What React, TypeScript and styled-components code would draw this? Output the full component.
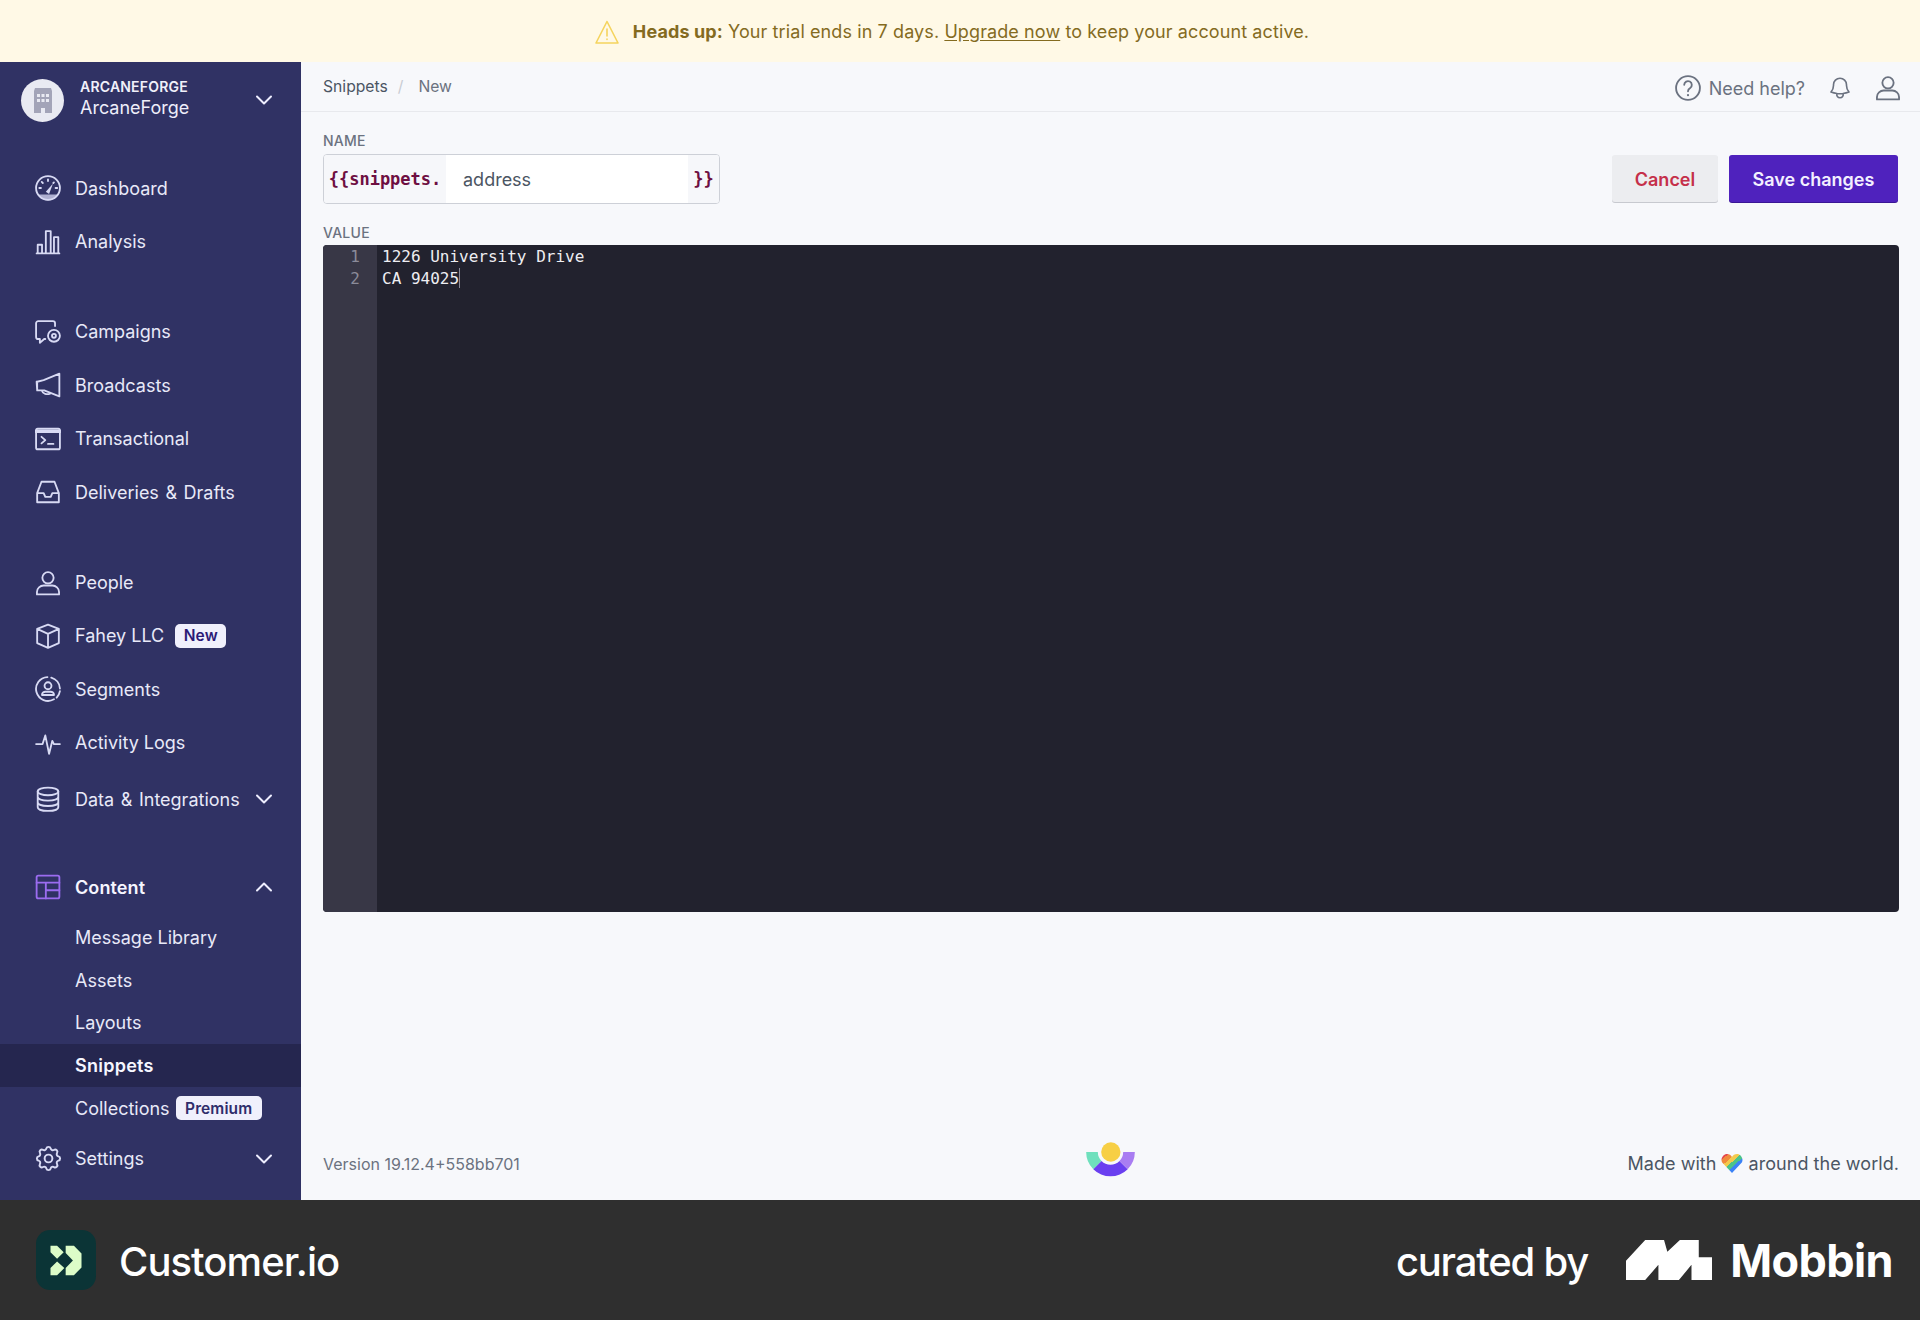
import React from "react";
import styled, { createGlobalStyle } from "styled-components";
import { HiOutlineCog } from "react-icons/hi";
import { HiOutlineBell } from "react-icons/hi2";

const Global = createGlobalStyle`
  html, body { margin: 0; padding: 0; background: #f7f8fb; }
  body { font-family: Inter, "Noto Sans", sans-serif; -webkit-font-smoothing: antialiased; }
  * { box-sizing: border-box; }
`;

const Page = styled.div`
  width: 1920px; height: 1320px; display: flex; flex-direction: column; overflow: hidden;
`;
const Banner = styled.div`
  height: 62px; flex: none; background: #fff9e6; color: #846b1f; font-size: 18px; letter-spacing: 0.1px;
  display: flex; align-items: center; justify-content: center; gap: 14px;
  padding-right: 16px; padding-top: 1px;
  b { font-weight: 700; }
  u { text-underline-offset: 2px; }
`;
const Middle = styled.div`flex: 1; display: flex; min-height: 0;`;
const Sidebar = styled.aside`
  width: 301px; flex: none; background: #303264; color: #e8e9f8; display: flex; flex-direction: column;
`;
const Org = styled.div`
  height: 76px; margin-bottom: 23.5px; padding: 0 0 0 21px; display: flex; align-items: center; gap: 16px; position: relative;
`;
const Avatar = styled.div`
  width: 43px; height: 43px; border-radius: 50%; background: #e9eaf2; display: flex; align-items: center; justify-content: center;
`;
const OrgText = styled.div`display: flex; flex-direction: column; flex: 1; margin-top: -4px;`;
const OrgCaps = styled.div`font-size: 14px; font-weight: 600; line-height: 20px; letter-spacing: 0.2px; color: #f0f0fa;`;
const OrgName = styled.div`font-size: 18px; line-height: 23px; margin-top: -1px; color: #eeeefa;`;
const Chev = styled.svg<{ $up?: boolean }>`
  width: 18px; height: 18px; flex: none; fill: none; stroke: #eef; stroke-width: 2; stroke-linecap: round; stroke-linejoin: round;
  transform: ${(p) => (p.$up ? "rotate(180deg)" : "none")};
`;
const OrgChev = styled.div`margin-right: 28px; margin-top: -1px; display: flex;`;
const Group = styled.div<{ $gap?: number }>`margin-bottom: ${(p) => p.$gap ?? 0}px; display: flex; flex-direction: column;`;
const Row = styled.div<{ $active?: boolean; $mt?: number }>`
  height: 53.4px; flex: none; padding: 0 28px 0 35px; display: flex; align-items: center;
  margin-top: ${(p) => p.$mt ?? 0}px;
  font-size: 18px; font-weight: ${(p) => (p.$active ? 600 : 400)}; color: ${(p) => (p.$active ? "#f6f6ff" : "#e8e9f8")};
  letter-spacing: ${(p) => (p.$active ? "0.1px" : "0")};
`;
const IconBox = styled.span<{ $color?: string; $size?: number }>`
  width: 26px; height: 26px; margin-right: 14px; flex: none; display: flex; align-items: center; justify-content: center;
  color: ${(p) => p.$color ?? "#d8daf4"};
  svg { width: ${(p) => p.$size ?? 26}px; height: ${(p) => p.$size ?? 26}px; flex: none; display: block; }
`;
const Label = styled.span`flex: 1; display: flex; align-items: center; white-space: pre;`;
const Amp = styled.span`margin: 0 1.5px;`;
const Sub = styled.div<{ $active?: boolean }>`
  height: 42.7px; flex: none; padding-left: 75px; display: flex; align-items: center; font-size: 18px;
  background: ${(p) => (p.$active ? "#25264f" : "transparent")};
  font-weight: ${(p) => (p.$active ? 600 : 400)};
  letter-spacing: ${(p) => (p.$active ? "0.25px" : "0")};
  color: ${(p) => (p.$active ? "#f6f6ff" : "#e8e9f8")};
`;
const Badge = styled.span<{ $ml: number; $color: string; $w: number }>`
  margin-left: ${(p) => p.$ml}px; height: 24px; width: ${(p) => p.$w}px; border-radius: 5px; background: #f0f0fc; color: ${(p) => p.$color};
  font-size: 15.5px; font-weight: 600; display: inline-flex; align-items: center; justify-content: center; letter-spacing: 0.1px;
`;
const SubList = styled.div`margin-top: 2px; margin-bottom: 2.5px; display: flex; flex-direction: column;`;

const Main = styled.main`flex: 1; min-width: 0; display: flex; flex-direction: column; background: #f7f8fb;`;
const Top = styled.header`
  height: 50px; flex: none; border-bottom: 1px solid #e8e9ed; padding: 0 21px 0 22px; display: flex; align-items: center;
`;
const Crumb = styled.nav`
  flex: 1; display: flex; align-items: center; font-size: 15.7px; color: #4b5563;
  i { font-style: normal; color: #c9ccd3; margin: 0 15px 0 10px; }
  span { color: #6b7280; }
`;
const TopRight = styled.div`display: flex; align-items: center; color: #6b7280; margin-right: -2px; margin-top: 3px;`;
const Help = styled.div`display: flex; align-items: center; gap: 8px; font-size: 18px; color: #6b7280; margin-right: 22px;`;
const TopIcon = styled.span<{ $mr?: number }>`
  display: flex; margin-right: ${(p) => p.$mr ?? 0}px; svg { width: 26px; height: 26px; display: block; }
`;
const Body = styled.div`flex: 1; padding: 19px 21px 0 22px; display: flex; flex-direction: column;`;
const FormRow = styled.div`display: flex; justify-content: space-between; align-items: flex-end;`;
const FieldLabel = styled.div`font-size: 14px; line-height: 20px; font-weight: 500; color: #6b7280; letter-spacing: 0.25px;`;
const NameInput = styled.div`
  margin-top: 3px; width: 397px; height: 50px; border: 1.5px solid #cdd0d7; border-radius: 4px; background: #fff; display: flex; overflow: hidden;
`;
const Affix = styled.div<{ $w: number }>`
  width: ${(p) => p.$w}px; flex: none; background: #f6f7fa; display: flex; align-items: center; justify-content: center;
  font-family: "DejaVu Sans Mono", monospace; font-weight: 700; font-size: 17px; color: #6e0f42;
`;
const NameValue = styled.div`flex: 1; padding-left: 17px; display: flex; align-items: center; font-size: 18px; color: #4b5563;`;
const Actions = styled.div`display: flex; gap: 11px; margin-bottom: 2px; margin-right: 1px;`;
const Btn = styled.button<{ $primary?: boolean; $w: number }>`
  width: ${(p) => p.$w}px; height: 47px; border: none; border-radius: 3px; padding: 2px 0 0; font: 600 18px Inter, sans-serif; 
  background: ${(p) => (p.$primary ? "#4f22bd" : "#ecedf0")};
  color: ${(p) => (p.$primary ? "#f3f0ff" : "#c5304a")};
  box-shadow: ${(p) => (p.$primary ? "0 1px 0 #3a1695" : "0 1px 0 #c7c9cf")};
`;
const ValueLabel = styled(FieldLabel)`margin-top: 19px; margin-bottom: 2px;`;
const Editor = styled.div`
  height: 667px; background: #22222e; border-radius: 4px; display: flex; overflow: hidden;
  font: 16px/22px "DejaVu Sans Mono", monospace;
`;
const Gutter = styled.div`
  width: 54px; flex: none; background: #383746; color: #8b8b99; text-align: right; padding: 1px 17px 0 0;
`;
const Code = styled.div`padding: 1px 0 0 5px; color: #eeeef2; white-space: pre; position: relative;`;
const Caret = styled.span`
  display: inline-block; width: 1px; height: 20px; background: #8b8b99; vertical-align: -4px;
`;
const Spacer = styled.div`flex: 1;`;
const MainFoot = styled.div`
  height: 84px; flex: none; padding: 0 0 2px; display: grid; grid-template-columns: 1fr auto 1fr; align-items: center;
  font-size: 16.5px; color: #4b5563;
`;
const Version = styled.div`font-size: 16px; color: #6b7280; padding-top: 14px;`;
const Made = styled.div`justify-self: end; display: flex; align-items: center; gap: 5px; font-size: 18px; letter-spacing: 0.05px; padding-top: 13px;`;
const CioMark = styled.svg`width: 49px; height: 36px; display: block; margin: 3px 2px 0 0;`;

const Foot = styled.footer`
  height: 120px; flex: none; background: #2f2f2f; color: #fff; display: flex; align-items: center; justify-content: space-between; padding: 0 27px 0 36px;
`;
const Brand = styled.div`display: flex; align-items: center; gap: 23px;`;
const AppIcon = styled.div`
  width: 60px; height: 60px; border-radius: 14px; background: #0b3436; display: flex; align-items: center; justify-content: center;
  svg { width: 34px; height: 33px; }
`;
const BrandName = styled.div`font-size: 40px; font-weight: 500; letter-spacing: -0.95px; padding-top: 2px;`;
const Curated = styled.div`display: flex; align-items: center;`;
const CuratedText = styled.div`font-size: 40px; font-weight: 500; letter-spacing: -1.2px; margin-right: 38px; padding-top: 2px;`;
const MobbinMark = styled.svg`width: 86px; height: 40px; margin-right: 18px; display: block;`;
const MobbinText = styled.div`font-size: 45px; font-weight: 700; letter-spacing: -0.6px;`;

const S = { fill: "none", stroke: "currentColor", strokeWidth: 1.7, strokeLinecap: "round" as const, strokeLinejoin: "round" as const };
const V = ({ children }: { children: React.ReactNode }) => <svg viewBox="0 0 24 24" {...S}>{children}</svg>;

const Down = ({ up }: { up?: boolean }) => (
  <Chev $up={up} viewBox="0 0 18 18"><path d="M2 5.500 9 12.500 16 5.500" /></Chev>
);

const Icons = {
  dash: <V><circle cx="12" cy="12" r="11" /><path d="M2.500 18h19a11 11 0 0 1-19 0z" fill="currentColor" stroke="none" opacity=".75" /><path d="M10 15.500 16.500 8l-3.500 9.500z" fill="currentColor" stroke="none" /><path d="M12 4v1.500M6.200 6.400l1 1M4 12h1.500M19 12h1.500M17.500 6.800l-.6.6" /></V>,
  bars: <V><path d="M1.500 22.500h21M2.500 22v-7.500h4V22M10 22V2h4.500v20M17.500 22V7.500h4V22" /></V>,
  camp: <V><path d="M18.500 6.500V4a2 2 0 0 0-2-2H3a2 2 0 0 0-2 2v12.500a2 2 0 0 0 2 2h1.500v3.500l4-3.500h1" /><circle cx="17.500" cy="15.500" r="5.500" /><circle cx="17.500" cy="15.500" r="1.800" /></V>,
  mega: <V><path d="M22.500 1.500v21L8.500 17H2v-.5L2 9 8 7.500zM1.500 9l.5 7.500" /><path d="M6.500 17.500c.5 2.800 4.500 3.500 7.500 2.400" /></V>,
  term: <V><rect x="1" y="2.500" width="22" height="19" rx="1.500" /><path d="M1 5h22" strokeWidth="3" /><path d="m6 10 3.500 3L6 16M12 16.500h5" /></V>,
  inbox: <V><path d="M2 13v8.500h20V13L18 2.500H6zM2 13h6l1.500 3.500h5L16 13h6" /></V>,
  user: <V><circle cx="12" cy="7.200" r="5.200" /><path d="M1.800 22.500v-2.200c0-3.500 3-6 6.200-6h8c3.200 0 6.200 2.500 6.200 6v2.200z" /></V>,
  cube: <V><path d="M12 1.500 2 5.500v13l10 4.500 10-4.500v-13zM2 5.500l10 4.500 10-4.500M12 10v13" /></V>,
  seg: <V><path d="M15 1.500a11 11 0 0 1 8 10M23 14a11 11 0 0 1-3 6M17.500 21.500A11 11 0 1 1 11.500 1" /><circle cx="12" cy="9" r="3.200" /><path d="M6.500 17.500v-.5c0-1.500 1.500-2.500 3-2.500h5c1.500 0 3 1 3 2.500v.5z" /></V>,
  pulse: <V><path d="M1 13h6l2.500-8 3.500 17 3-12 1.500 3H23" /></V>,
  db: <V><ellipse cx="12" cy="5" rx="9.500" ry="3.500" /><path d="M2.500 5v14.500C2.500 21.500 6.500 23 12 23s9.500-1.500 9.500-3.500V5M2.500 10c0 2 4 3.500 9.500 3.500s9.500-1.500 9.500-3.500M2.500 15c0 2 4 3.500 9.500 3.500s9.500-1.500 9.500-3.500" /></V>,
  layout: <V><rect x="1.500" y="1.500" width="21" height="21" rx="1.500" /><path d="M1.500 8h21M10 8v14.500M10 15h12.500" /></V>,
};

const NavRow = ({ icon, children, color, mt, active, chev, size }: { icon: React.ReactNode; children: React.ReactNode; color?: string; mt?: number; active?: boolean; chev?: "up" | "down"; size?: number }) => (
  <Row $active={active} $mt={mt}>
    <IconBox $color={color} $size={size}>{icon}</IconBox>
    <Label>{children}</Label>
    {chev && <Down up={chev === "up"} />}
  </Row>
);

export default function App() {
  return (
    <Page>
      <Global />
      <Banner>
        <svg width="24" height="24" viewBox="0 0 24 24" fill="none" stroke="#f5d45e" strokeWidth="1.6" strokeLinejoin="round" strokeLinecap="round">
          <path d="M12 1.500 1 23h22zM12 9v7M12 19v.5" />
        </svg>
        <span><b>Heads up:</b> Your trial ends in 7 days. <u>Upgrade now</u> to keep your account active.</span>
      </Banner>
      <Middle>
        <Sidebar>
          <Org>
            <Avatar>
              <svg width="22" height="26" viewBox="0 0 22 26">
                <path d="M3 1h16l1 3v22h-7v-5H9v5H2V4z" fill="#a3a4b8" />
                <g fill="#e9eaf2"><rect x="5" y="7" width="3" height="3" /><rect x="9.500" y="7" width="3" height="3" /><rect x="14" y="7" width="3" height="3" /><rect x="5" y="12" width="3" height="3" /><rect x="9.500" y="12" width="3" height="3" /><rect x="14" y="12" width="3" height="3" /></g>
              </svg>
            </Avatar>
            <OrgText>
              <OrgCaps>ARCANEFORGE</OrgCaps>
              <OrgName>ArcaneForge</OrgName>
            </OrgText>
            <OrgChev><Down /></OrgChev>
          </Org>
          <Group $gap={37}>
            <NavRow icon={Icons.dash}>Dashboard</NavRow>
            <NavRow icon={Icons.bars}>Analysis</NavRow>
          </Group>
          <Group $gap={37}>
            <NavRow icon={Icons.camp}>Campaigns</NavRow>
            <NavRow icon={Icons.mega}>Broadcasts</NavRow>
            <NavRow icon={Icons.term}>Transactional</NavRow>
            <NavRow icon={Icons.inbox}>Deliveries <Amp>&amp;</Amp> Drafts</NavRow>
          </Group>
          <Group $gap={35}>
            <NavRow icon={Icons.user}>People</NavRow>
            <NavRow icon={Icons.cube}>Fahey LLC<Badge $ml={11} $color="#2b1a77" $w={51}>New</Badge></NavRow>
            <NavRow icon={Icons.seg}>Segments</NavRow>
            <NavRow icon={Icons.pulse}>Activity Logs</NavRow>
            <NavRow icon={Icons.db} mt={3} chev="down">Data <Amp>&amp;</Amp> Integrations</NavRow>
          </Group>
          <Group>
            <NavRow icon={Icons.layout} color="#9b6cf0" active chev="up">Content</NavRow>
            <SubList>
              <Sub>Message Library</Sub>
              <Sub>Assets</Sub>
              <Sub>Layouts</Sub>
              <Sub $active>Snippets</Sub>
              <Sub>Collections<Badge $ml={6} $color="#2f2d6b" $w={86}>Premium</Badge></Sub>
            </SubList>
            <NavRow icon={<HiOutlineCog strokeWidth={1.5} />} size={31} chev="down">Settings</NavRow>
          </Group>
        </Sidebar>
        <Main>
          <Top>
            <Crumb>Snippets<i>/</i><span>New</span></Crumb>
            <TopRight>
              <Help>
                <TopIcon><svg viewBox="0 0 24 24" {...S}><circle cx="12" cy="12" r="11" /><path d="M8.500 9a3.500 3.500 0 1 1 5.500 3c-1.300.8-2 1.300-2 3" /><path d="M12 18.500v.2" strokeWidth="2" /></svg></TopIcon>
                Need help?
              </Help>
              <TopIcon $mr={22}><HiOutlineBell /></TopIcon>
              <TopIcon><svg viewBox="0 0 24 24" {...S}><circle cx="12" cy="7.200" r="5.200" /><path d="M1.800 22.500v-2.200c0-3.500 3-6 6.200-6h8c3.200 0 6.200 2.500 6.200 6v2.200z" /></svg></TopIcon>
            </TopRight>
          </Top>
          <Body>
            <FormRow>
              <div>
                <FieldLabel>NAME</FieldLabel>
                <NameInput>
                  <Affix $w={122}>{"{{snippets."}</Affix>
                  <NameValue>address</NameValue>
                  <Affix $w={31}>{"}}"}</Affix>
                </NameInput>
              </div>
              <Actions>
                <Btn $w={106}>Cancel</Btn>
                <Btn $primary $w={169}>Save changes</Btn>
              </Actions>
            </FormRow>
            <ValueLabel>VALUE</ValueLabel>
            <Editor>
              <Gutter>1<br />2</Gutter>
              <Code>1226 University Drive{"\n"}CA 94025<Caret /></Code>
            </Editor>
            <Spacer />
            <MainFoot>
              <Version>Version 19.12.4+558bb701</Version>
              <CioMark viewBox="30 20 146 108">
                <path d="M30 53A73 73 0 0 0 51.400 104.600L76.100 79.900A38 38 0 0 1 65 53Z" fill="#6fe0bd" />
                <path d="M51.400 104.600A73 73 0 0 0 154.600 104.600L129.900 79.900A38 38 0 0 1 76.100 79.900Z" fill="#6a3ff0" />
                <path d="M176 53A73 73 0 0 1 154.600 104.600L129.900 79.900A38 38 0 0 0 141 53Z" fill="#a97df2" />
                <circle cx="104" cy="53" r="29" fill="#f7cf45" />
              </CioMark>
              <Made>
                Made with
                <svg width="22" height="19" viewBox="0 0 22 19">
                  <defs><linearGradient id="rb" x1="0" y1="0" x2="1" y2="1">
                    <stop offset=".16" stopColor="#e5484d" /><stop offset=".16" stopColor="#f08a3c" /><stop offset=".32" stopColor="#f08a3c" /><stop offset=".32" stopColor="#f2c94c" /><stop offset=".46" stopColor="#f2c94c" /><stop offset=".46" stopColor="#4cc38a" /><stop offset=".6" stopColor="#4cc38a" /><stop offset=".6" stopColor="#3b82f6" /><stop offset=".75" stopColor="#3b82f6" /><stop offset=".75" stopColor="#6d3fd8" />
                  </linearGradient></defs>
                  <path d="M11 19 1.200 8.500C-1 4.500 2.500 0 6 0 8.200 0 10 1.200 11 3c1-1.800 2.800-3 5-3 3.500 0 7 4.500 4.800 8.500z" fill="url(#rb)" />
                </svg>
                around the world.
              </Made>
            </MainFoot>
          </Body>
        </Main>
      </Middle>
      <Foot>
        <Brand>
          <AppIcon>
            <svg viewBox="60 55 102 100"><path d="M64 60H84L104 80L84 100L64 80ZM64 128L84 108L106 128L84 150H64ZM110 60H135L158 84V126L135 150H110V128L132 105L110 82Z" fill="#dcfcc8" /></svg>
          </AppIcon>
          <BrandName>Customer.io</BrandName>
        </Brand>
        <Curated>
          <CuratedText>curated by</CuratedText>
          <MobbinMark viewBox="20 28 260 116" preserveAspectRatio="none">
            <path d="M20 144V88L78 28H135L145 62L183 28H240V78H280V144H218V100L180 144H118V100L78 144Z" fill="#fff" />
          </MobbinMark>
          <MobbinText>Mobbin</MobbinText>
        </Curated>
      </Foot>
    </Page>
  );
}
